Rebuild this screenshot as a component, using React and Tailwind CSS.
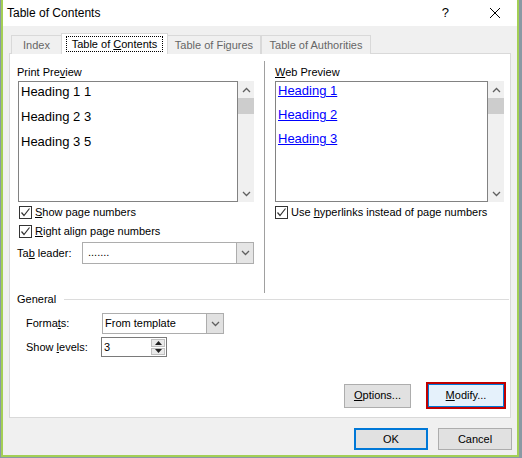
import { useState } from "react";

const ui = { fontFamily: '"Liberation Sans", Arial, sans-serif' };
const preview = { fontFamily: '"Liberation Sans", Arial, sans-serif' };

function Chevron({ up = false, className = "" }) {
  return (
    <svg width="9" height="6" viewBox="0 0 9 6" className={className}>
      <path
        d={up ? "M1 5 L4.5 1.5 L8 5" : "M1 1 L4.5 4.5 L8 1"}
        fill="none"
        stroke="#606060"
        strokeWidth="1.3"
      />
    </svg>
  );
}

function CheckBox({ checked, children }) {
  return (
    <label className="flex items-center gap-[3px] h-[19px] whitespace-nowrap">
      <span className="w-[13px] h-[13px] shrink-0 border border-[#333] bg-white flex items-center justify-center">
        {checked && (
          <svg width="11" height="11" viewBox="0 0 11 11">
            <path d="M1.5 5.5 L4 8.5 L9.5 1.5" fill="none" stroke="#333" strokeWidth="1.2" />
          </svg>
        )}
      </span>
      <span>{children}</span>
    </label>
  );
}

function Scroller() {
  return (
    <div className="w-[16px] h-full bg-[#f0f0f0] flex flex-col items-center">
      <div className="h-[17px] flex items-center justify-center">
        <Chevron up />
      </div>
      <div className="w-[16px] h-[16px] bg-[#cdcdcd]" />
      <div className="flex-1" />
      <div className="h-[17px] flex items-center justify-center">
        <Chevron />
      </div>
    </div>
  );
}

function Btn({ children, className = "" }) {
  return (
    <div className={"bg-[#e1e1e1] flex items-center justify-center " + className}>
      {children}
    </div>
  );
}

export default function App() {
  const [levels] = useState(3);
  const tabs = ["Index", "Table of Contents", "Table of Figures", "Table of Authorities"];

  return (
    <div className="w-[522px] h-[458px] bg-[#8a99a4] overflow-hidden text-[11px] text-black" style={ui}>
      <div className="ml-[1px] w-[518px] h-[457px] border-x-2 border-b-2 border-[#a3cf55] flex flex-col">
        {/* title bar */}
        <div className="h-[26px] bg-white flex items-center pl-[4px] shrink-0">
          <span className="text-[12px]">Table of Contents</span>
          <div className="flex-1" />
          <span className="text-[13px] mr-[40px]">?</span>
          <svg width="12" height="12" viewBox="0 0 12 12" className="mr-[16px]">
            <path d="M1 1 L11 11 M11 1 L1 11" stroke="#000" strokeWidth="1" />
          </svg>
        </div>

        <div className="flex-1 bg-[#f0f0f0] flex flex-col">
          {/* tabs */}
          <div className="flex items-end h-[21px] mt-[7px] ml-[8px] relative z-10">
            {tabs.map((t, i) =>
              i === 1 ? (
                <div
                  key={t}
                  className="w-[107px] h-[21px] bg-white border border-b-0 border-[#d9d9d9] flex items-center justify-center -mx-[1px]"
                >
                  <span className="border border-dotted border-black px-[5px] leading-[14px]">
                    Table of <u>C</u>ontents
                  </span>
                </div>
              ) : (
                <div
                  key={t}
                  className={
                    "h-[19px] bg-[#f0f0f0] border border-b-0 border-[#d9d9d9] flex items-center justify-center text-[#666] " +
                    (i === 0 ? "w-[51px]" : i === 2 ? "w-[94px]" : "w-[110px]")
                  }
                >
                  {t}
                </div>
              )
            )}
          </div>

          {/* panel */}
          <div className="ml-[6px] w-[502px] h-[365px] -mt-[1px] bg-white border border-[#d9d9d9] flex flex-col">
            <div className="flex pt-[10px] h-[236px]">
              {/* left column */}
              <div className="ml-[7px] w-[237px] flex flex-col">
                <div className="h-[16px] leading-[16px]">
                  Print Pre<u>v</u>iew
                </div>
                <div className="flex h-[121px] mt-[1px] ml-[1px]">
                  <div
                    className="w-[220px] h-full border border-[#828282] bg-white pl-[2px] flex flex-col gap-[6px]"
                    style={preview}
                  >
                    <div className="text-[13px] leading-[19px]">Heading 1 1</div>
                    <div className="text-[13px] leading-[19px]">Heading 2 3</div>
                    <div className="text-[13px] leading-[19px]">Heading 3 5</div>
                  </div>
                  <Scroller />
                </div>
                <div className="mt-[1px] ml-[2px]">
                  <CheckBox checked>
                    <u>S</u>how page numbers
                  </CheckBox>
                  <CheckBox checked>
                    <u>R</u>ight align page numbers
                  </CheckBox>
                </div>
                <div className="flex items-center mt-[1px]">
                  <span className="w-[65px]">
                    Ta<u>b</u> leader:
                  </span>
                  <div className="w-[172px] h-[22px] border border-[#adadad] bg-white flex">
                    <span className="flex-1 pl-[5px] leading-[18px]">.......</span>
                    <div className="w-[17px] h-full bg-[#e5e5e5] border-l border-[#adadad] flex items-center justify-center">
                      <Chevron />
                    </div>
                  </div>
                </div>
              </div>

              {/* separator */}
              <div className="ml-[10px] -mt-[3px] w-px h-[232px] bg-[#a0a0a0]" />

              {/* right column */}
              <div className="ml-[10px] w-[236px] flex flex-col">
                <div className="h-[16px] leading-[16px]">
                  <u>W</u>eb Preview
                </div>
                <div className="flex h-[121px] mt-[1px]">
                  <div
                    className="w-[213px] h-full border border-[#828282] bg-white pl-[2px] flex flex-col gap-[6px]"
                    style={preview}
                  >
                    {["Heading 1", "Heading 2", "Heading 3"].map((h) => (
                      <div key={h} className="text-[13px] leading-[18px] text-[#0000ff] underline">
                        {h}
                      </div>
                    ))}
                  </div>
                  <Scroller />
                </div>
                <div className="mt-[1px]">
                  <CheckBox checked>
                    Use <u>h</u>yperlinks instead of page numbers
                  </CheckBox>
                </div>
              </div>
            </div>

            {/* general */}
            <div className="flex items-center ml-[7px] mt-[1px] h-[16px]">
              <span>General</span>
              <div className="flex-1 h-px bg-[#dcdcdc] ml-[8px] mr-[1px]" />
            </div>
            <div className="ml-[16px] mt-[6px] flex items-center">
              <span className="w-[76px]">
                Forma<u>t</u>s:
              </span>
              <div className="w-[122px] h-[21px] border border-[#adadad] bg-white flex">
                <span className="flex-1 pl-[2px] leading-[19px]">From template</span>
                <div className="w-[17px] h-full bg-[#e1e1e1] border-l border-[#adadad] flex items-center justify-center">
                  <Chevron />
                </div>
              </div>
            </div>
            <div className="ml-[16px] mt-[3px] flex items-center">
              <span className="w-[75px]">
                Show <u>l</u>evels:
              </span>
              <div className="w-[66px] h-[20px] border border-[#7a7a7a] bg-white flex">
                <span className="flex-1 pl-[2px] leading-[18px]">{levels}</span>
                <div className="w-[16px] h-full flex flex-col gap-px p-px">
                  <div className="flex-1 bg-[#eaeaea] border border-[#c0c0c0] flex items-center justify-center">
                    <svg width="7" height="4" viewBox="0 0 7 4">
                      <path d="M0 4 L3.5 0 L7 4 Z" fill="#222" />
                    </svg>
                  </div>
                  <div className="flex-1 bg-[#eaeaea] border border-[#c0c0c0] flex items-center justify-center">
                    <svg width="7" height="4" viewBox="0 0 7 4">
                      <path d="M0 0 L3.5 4 L7 0 Z" fill="#222" />
                    </svg>
                  </div>
                </div>
              </div>
            </div>

            <div className="flex-1" />
            <div className="flex items-center justify-end mb-[8px] mr-[4px]">
              <Btn className="w-[67px] h-[24px] border border-[#adadad]">
                <span>
                  <u>O</u>ptions...
                </span>
              </Btn>
              <div className="ml-[15px] w-[80px] h-[27px] border-2 border-[#c00000] flex">
                <div className="flex-1 bg-[#e5f1fb] border border-[#0078d7] flex items-center justify-center">
                  <span>
                    <u>M</u>odify...
                  </span>
                </div>
              </div>
            </div>
          </div>

          {/* bottom buttons */}
          <div className="flex justify-end mt-[10px] mr-[5px]">
            <Btn className="w-[74px] h-[22px] border-2 border-[#0078d7]">OK</Btn>
            <Btn className="ml-[10px] w-[74px] h-[22px] border border-[#adadad]">Cancel</Btn>
          </div>
        </div>
      </div>
    </div>
  );
}
